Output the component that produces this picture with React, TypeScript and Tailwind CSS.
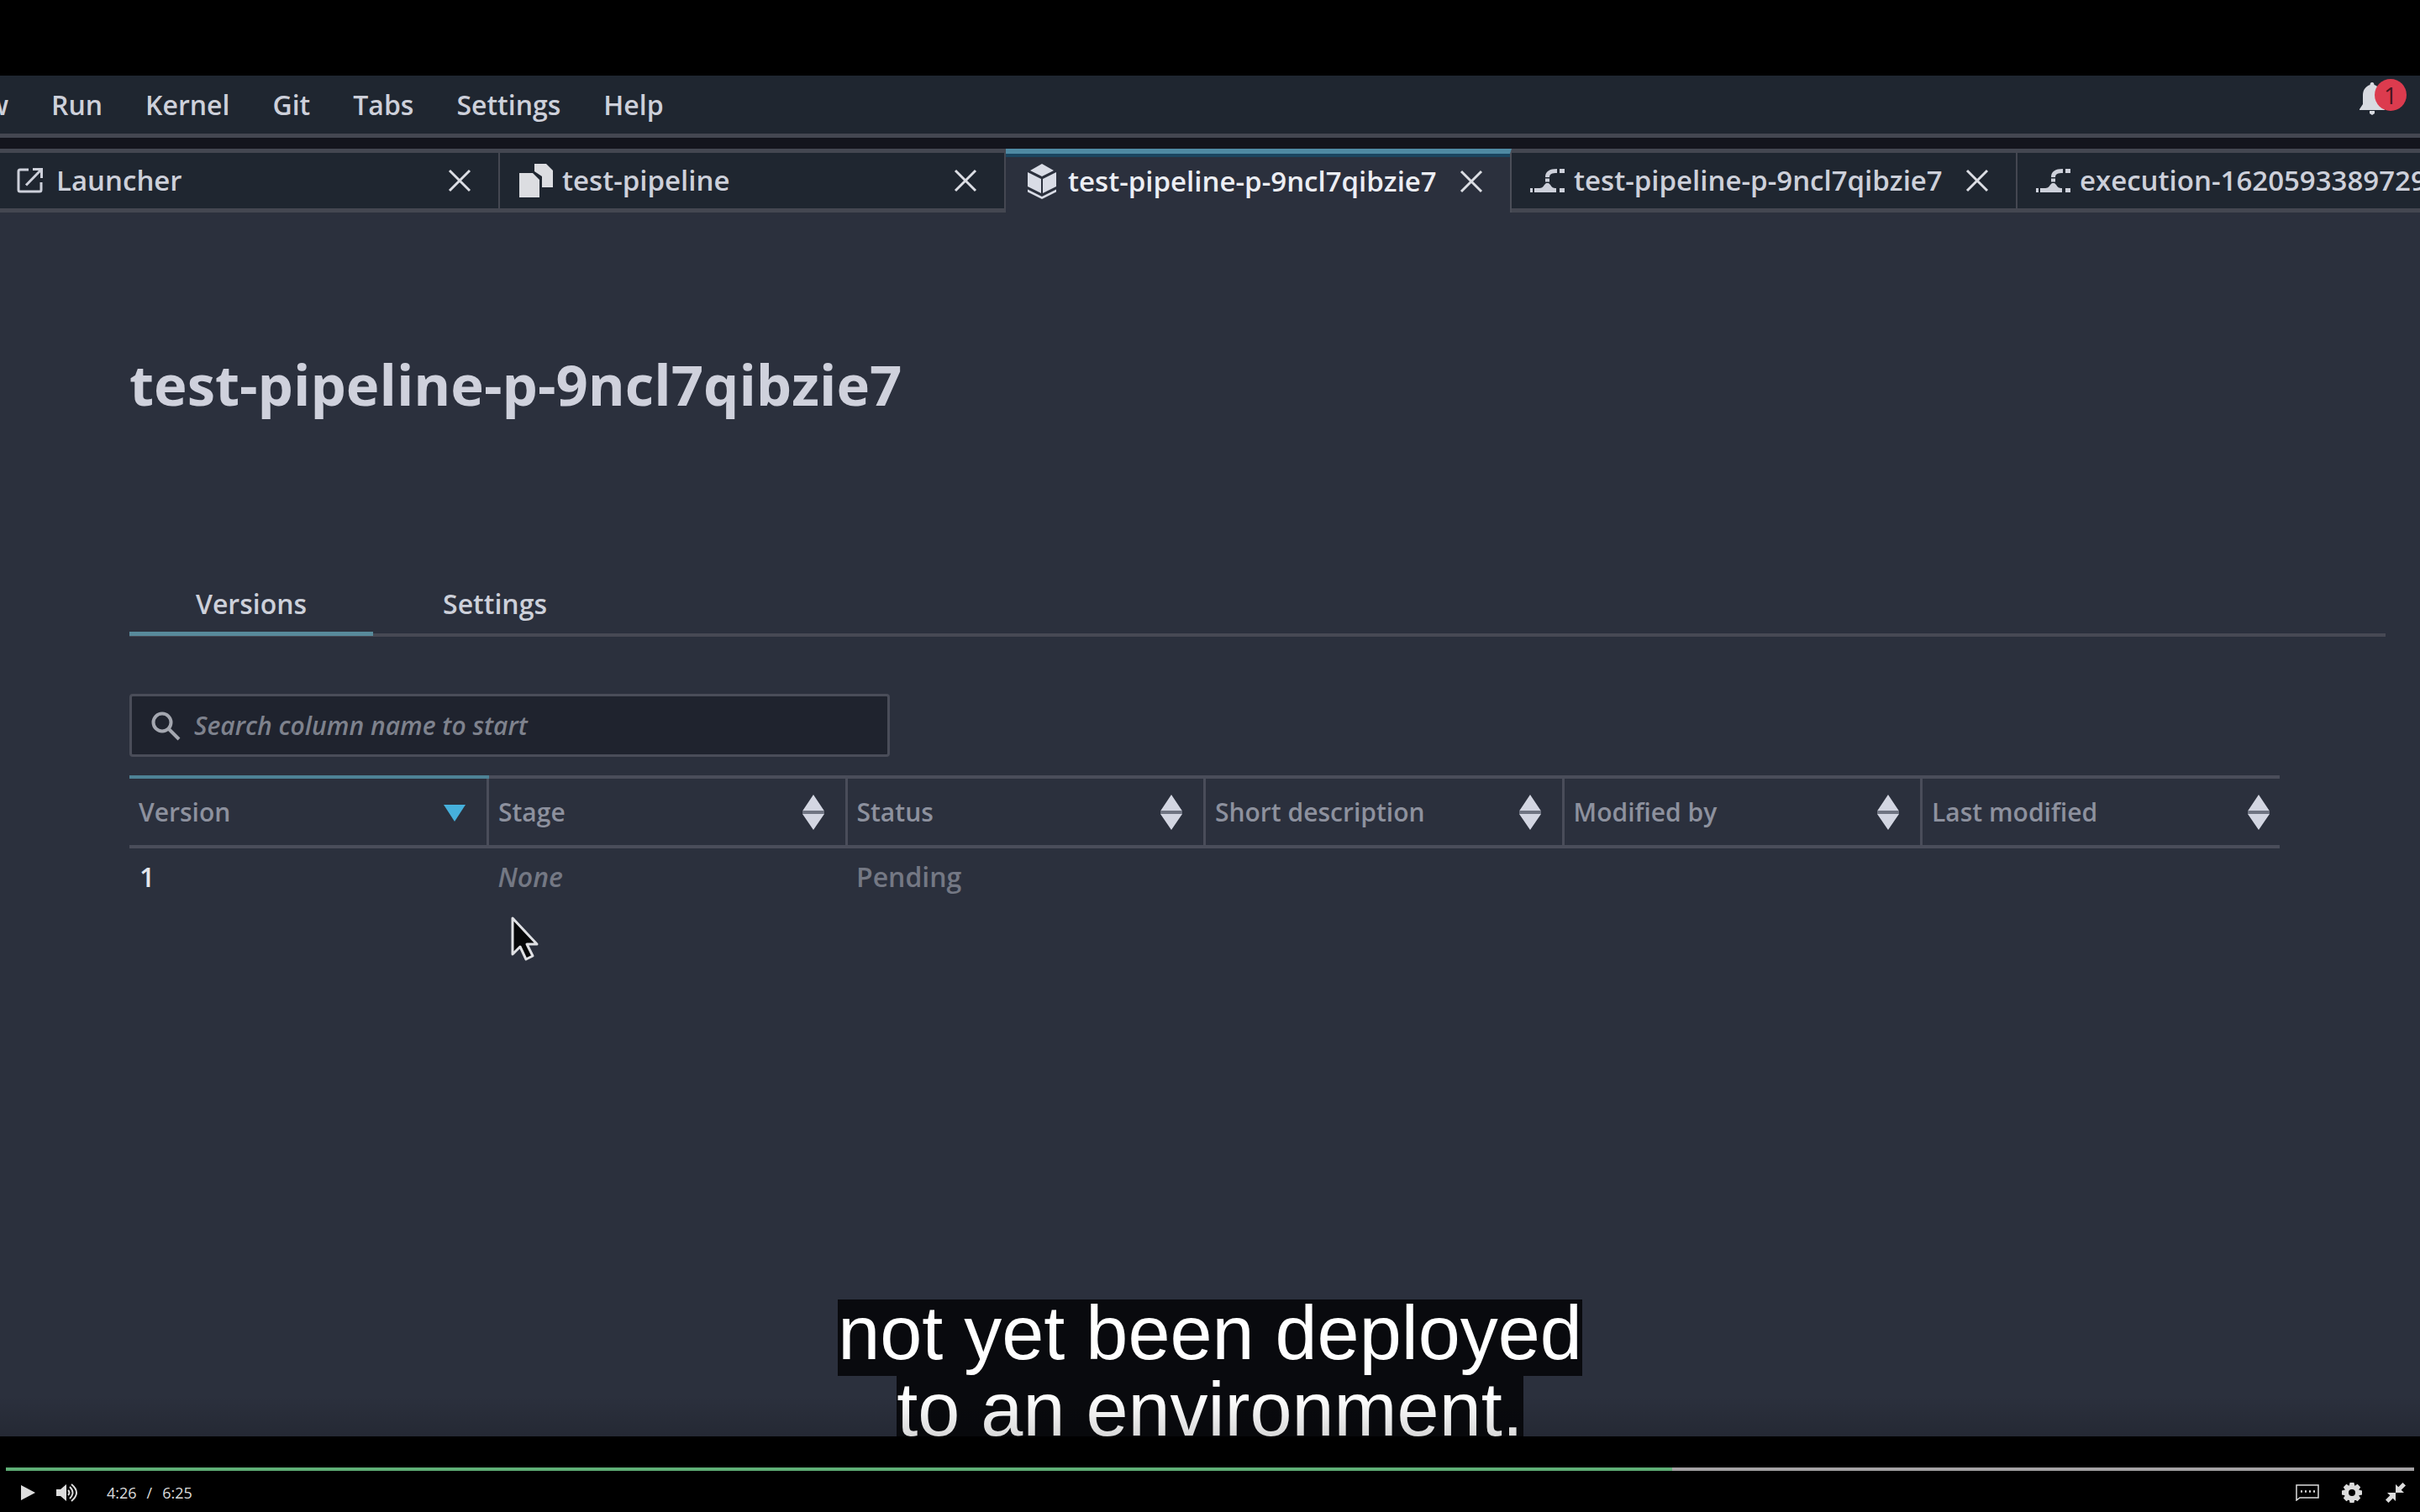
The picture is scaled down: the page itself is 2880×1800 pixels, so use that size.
import { useState } from "react";

const menus = ["Run", "Kernel", "Git", "Tabs", "Settings", "Help"];

function LauncherIcon() {
  return (
    <svg viewBox="0 0 32 32" className="h-8 w-8" fill="none" stroke="currentColor" strokeWidth="3">
      <path d="M14 3H4a2 2 0 0 0-2 2v22a2 2 0 0 0 2 2h23a2 2 0 0 0 2-2V18M19 2.500h10.500V13M29 3 11 21.500" />
    </svg>
  );
}

function CopyIcon() {
  return (
    <svg viewBox="0 0 42 42" className="h-[42px] w-[42px]" fill="#dcdde1">
      <path d="M19 1h14l8 8v20H28V16l-9-6z" />
      <path d="M1 12h16l8 8v21H1z" />
    </svg>
  );
}

function CubeIcon() {
  return (
    <svg viewBox="0 0 36 42" className="h-[42px] w-9" fill="#d9dce6">
      <path d="M18 0 32 8 18 15 4 8z" />
      <path d="M1 10 17 18v17L1 27zM35 10 19 18v17l16-8z" />
      <path d="M1 30.500 18 39l17-8.500v3L18 42 1 33.500z" />
    </svg>
  );
}

function PipelineIcon() {
  return (
    <svg viewBox="0 0 42 32" className="h-8 w-[42px]" fill="currentColor">
      <path d="M0 25h3v5H0zM5 25h5c4 0 5-1 7-4l2-2h3l2 2c2 3 3 4 7 4v5H5zM35 2h6v5h-6zM35 25h6v5h-6z" />
      <path d="M18 12C18 5 23 2 32 2v5c-6 0-9 1-9 5z" />
      <path d="M18 13.500h5v4h-5z" />
    </svg>
  );
}

function CloseIcon() {
  return (
    <svg viewBox="0 0 28 28" className="h-7 w-7" fill="none" stroke="currentColor" strokeWidth="3">
      <path d="M2 2l24 24M26 2 2 26" />
    </svg>
  );
}

const docs = [
  { icon: LauncherIcon, name: "Launcher" },
  { icon: CopyIcon, name: "test-pipeline" },
  { icon: CubeIcon, name: "test-pipeline-p-9ncl7qibzie7", active: true },
  { icon: PipelineIcon, name: "test-pipeline-p-9ncl7qibzie7" },
  { icon: PipelineIcon, name: "execution-1620593389729" },
];

const columns = ["Version", "Stage", "Status", "Short description", "Modified by", "Last modified"];

function SortIcon({ sorted }: { sorted: boolean }) {
  return (
    <svg viewBox="0 0 26 42" className="h-[42px] w-[26px]">
      {sorted ? (
        <path d="M0 12h26L13 32z" fill="#46b0dc" />
      ) : (
        <>
          <path d="M0 19.500 13 0l13 19.500zM0 23h26L13 42z" fill="#d3d6e2" />
          <path d="M0 19h26v4H0z" fill="#6f7482" />
        </>
      )}
    </svg>
  );
}

function MenuBar() {
  return (
    <header className="flex h-[74px] items-start justify-between border-b-5 border-[#444751] bg-[#1f2630]">
      <nav className="flex gap-[51px] pt-3 text-[32px] leading-[46px] font-semibold text-[#cdd0da]">
        <button className="flex w-[10px] justify-end overflow-hidden">View</button>
        {menus.map((m) => (
          <button key={m}>{m}</button>
        ))}
      </nav>
      <button aria-label="Notifications" className="relative mt-2 mr-4 h-10 w-14 text-[#d8dae0]">
        <svg viewBox="0 0 30 40" className="h-10 w-[30px]" fill="currentColor">
          <path d="M15 0c1.500 0 2.500 1 2.500 3C23 5 26 9 26 16v10l4 6v1H0v-1l4-6V16C4 9 7 5 12.500 3c0-2 1-3 2.500-3zM12 34h6v3l-3 2-3-2z" />
        </svg>
        <span className="absolute -top-1 right-0 flex h-[38px] w-[38px] items-center justify-center rounded-full bg-[#dc3b4e] text-[28px] text-[#4a1420]">
          1
        </span>
      </button>
    </header>
  );
}

function DocTabs() {
  return (
    <div className="mt-[13px] flex h-[76px] overflow-hidden bg-[#1f2630]">
      <div className="-ml-[7px] flex min-w-0 grow">
        {docs.map(({ icon: Icon, name, active }, i) => (
          <div
            key={i}
            className={
              active
                ? "flex w-[602px] shrink-0 items-center border-t-6 border-r-2 border-t-[#4f8aa3] border-r-[#4b4e58] bg-[#2b303d] pb-1 pl-[22px] text-[#eceef4] shadow-[inset_0_4px_0_#1b4560]"
                : "flex w-[602px] shrink-0 items-center border-t-5 border-r-2 border-b-5 border-[#444751] pl-[22px] text-[#cdd0da]"
            }
          >
            <button className="flex min-w-0 items-center gap-[10px] text-[33px] leading-10 font-semibold whitespace-nowrap">
              <span className="flex w-[42px] justify-center">
                <Icon />
              </span>
              {name}
            </button>
            <button aria-label={`Close ${name}`} className="mr-8 ml-auto text-[#dcdee4]">
              <CloseIcon />
            </button>
          </div>
        ))}
      </div>
    </div>
  );
}

function VersionsTable() {
  return (
    <table className="mt-[22px] w-[calc(100%-126px)] table-fixed border-collapse text-left leading-10">
      <thead>
        <tr className="border-b-4 border-[#4a4d5a] text-[30px] text-[#8d919e]">
          {columns.map((c, i) => (
            <th
              key={c}
              aria-sort={i === 0 ? "descending" : "none"}
              className={
                i === 0
                  ? "border-t-4 border-r-3 border-t-[#4e8296] border-r-[#4a4d5a] p-0 font-semibold"
                  : i === 5
                    ? "border-t-4 border-[#4a4d5a] p-0 font-semibold"
                    : "border-t-4 border-r-3 border-[#4a4d5a] p-0 font-semibold"
              }
            >
              <button
                className={
                  i === 5
                    ? "flex h-[79px] w-full items-center justify-between pr-3 pl-[11px]"
                    : "flex h-[79px] w-full items-center justify-between pr-[25px] pl-[11px]"
                }
              >
                {c}
                <SortIcon sorted={i === 0} />
              </button>
            </th>
          ))}
        </tr>
      </thead>
      <tbody>
        <tr className="text-[32px] font-semibold text-[#747884]">
          <td className="px-3 pt-[14px] text-[#e4e6ec]">1</td>
          <td className="px-3 pt-[14px] italic">None</td>
          <td className="px-3 pt-[14px]">Pending</td>
          <td />
          <td />
          <td />
        </tr>
      </tbody>
    </table>
  );
}

function Pointer() {
  return (
    <svg viewBox="0 0 34 54" className="absolute top-[1000px] left-[608px] h-[54px] w-[34px]">
      <path d="M2 3v43l9-9 7 15 8-4-7-14h12z" fill="#050608" stroke="#dfe0e4" strokeWidth="3" strokeLinejoin="round" />
    </svg>
  );
}

function Controls() {
  const [time, setTime] = useState(69.2);
  const track = `linear-gradient(to right, #5fae76 ${time}%, #a3a1a3 ${time}%)`;
  return (
    <footer className="flex flex-col bg-black px-[7px] pt-[37px] text-[#dcdcdc]">
      <input
        type="range"
        aria-label="Seek"
        min={0}
        max={100}
        step="any"
        value={time}
        onChange={(e) => setTime(Number(e.target.value))}
        className="h-1 w-full appearance-none [&::-webkit-slider-thumb]:h-0 [&::-webkit-slider-thumb]:w-0 [&::-webkit-slider-thumb]:appearance-none"
        style={{ background: track }}
      />
      <div className="flex h-[49px] items-center px-[10px] pt-1 pb-[2px]">
        <button aria-label="Play" className="ml-2">
          <svg viewBox="0 0 18 18" className="h-[18px] w-[18px]" fill="currentColor">
            <path d="M0 0 17 9 0 18z" />
          </svg>
        </button>
        <button aria-label="Mute" className="ml-6">
          <svg viewBox="0 0 26 22" className="h-[22px] w-[26px]" fill="none" stroke="currentColor" strokeWidth="2">
            <path d="M0 7h5l7-6v20l-7-6H0z" fill="currentColor" stroke="none" />
            <path d="M14 8q3 3 0 6M16 4q7 7 0 14M18 1q12 10 0 20" />
          </svg>
        </button>
        <span className="ml-[34px] flex gap-3 text-[18px] leading-6">
          <span>4:26</span>
          <span>/</span>
          <span>6:25</span>
        </span>
        <button aria-label="Subtitles" className="ml-auto">
          <svg viewBox="0 0 28 20" className="h-5 w-7" fill="none" stroke="currentColor" strokeWidth="1.500">
            <path d="M1 1h26v15H5l-4 3z" />
            <path d="M6 8.500h17" strokeWidth="2.500" strokeDasharray="2 3" />
          </svg>
        </button>
        <button aria-label="Playback settings" className="ml-[27px]">
          <svg viewBox="0 0 24 24" className="h-6 w-6">
            <g fill="currentColor">
              <circle cx="12" cy="12" r="9" />
              <path d="M9.500 0h5l1 5h-7zM9.500 24h5l1-5h-7zM0 9.500v5l5 1v-7zM24 9.500v5l-5 1v-7zM1.800 5.400l3.600-3.600L9.500 4.500 4.500 9.500zM18.600 1.800l3.600 3.600-2.700 4.100-5-5zM22.200 18.600l-3.600 3.600-4.100-2.700 5-5zM5.400 22.200l-3.600-3.600 2.700-4.100 5 5z" />
            </g>
            <circle cx="12" cy="12" r="4" fill="#000" />
          </svg>
        </button>
        <button aria-label="Exit full screen" className="ml-7">
          <svg viewBox="0 0 24 24" className="h-6 w-6" fill="currentColor">
            <path d="M12 12V2l3.300 3.300L20.500 0 24 3.500l-5.300 5.200L22 12zM12 12v10l-3.300-3.300L3.500 24 0 20.500l5.300-5.200L2 12z" />
          </svg>
        </button>
      </div>
    </footer>
  );
}

export default function App() {
  return (
    <div className="flex min-h-screen flex-col overflow-x-hidden bg-black pt-[90px] font-['Open_Sans','Noto_Sans',sans-serif]">
      <section className="relative flex grow flex-col bg-[#14151d]">
        <MenuBar />
        <DocTabs />
        <main className="grow bg-[#2b303d] pr-[41px] pl-[154px]">
          <h1 className="pt-[160px] text-[67px] leading-[88px] font-bold text-[#cfd1dc]">test-pipeline-p-9ncl7qibzie7</h1>
          <div role="tablist" className="mt-[193px] flex h-[64px] border-b-4 border-[#474954] text-[32px] leading-[46px] font-semibold text-[#cdd0da]">
            <button role="tab" aria-selected="true" className="h-[63px] w-[290px] border-b-5 border-[#588a9b] pb-[9px]">
              Versions
            </button>
            <button role="tab" aria-selected="false" className="h-[63px] w-[290px] pb-[14px]">
              Settings
            </button>
          </div>
          <label className="mt-[68px] flex h-[75px] w-[905px] items-center gap-4 rounded-sm border-3 border-[#4a4d59] bg-[#1f232e] pl-[22px]">
            <svg viewBox="0 0 36 36" className="h-9 w-9" fill="none" stroke="#a4a7b0" strokeWidth="4">
              <circle cx="14" cy="14" r="10.500" />
              <path d="M21 21 34 34" />
            </svg>
            <input
              type="text"
              aria-label="Search versions"
              placeholder="Search column name to start"
              className="grow bg-transparent text-[30px] leading-10 font-semibold italic outline-none placeholder:text-[#7e828d]"
            />
          </label>
          <VersionsTable />
        </main>
        <Pointer />
        <p className="absolute inset-x-0 bottom-0 text-center font-['Liberation_Sans',sans-serif] text-[90px] leading-[81px] text-white">
          <span className="mx-auto block h-[91px] w-fit bg-[#090a0e]">not yet been deployed</span>
          <span className="mx-auto block h-[72px] w-fit bg-[#090a0e]">to an environment.</span>
        </p>
        <div className="pointer-events-none absolute inset-x-0 bottom-0 h-12 bg-linear-to-t from-black/15 to-transparent" />
      </section>
      <Controls />
    </div>
  );
}
